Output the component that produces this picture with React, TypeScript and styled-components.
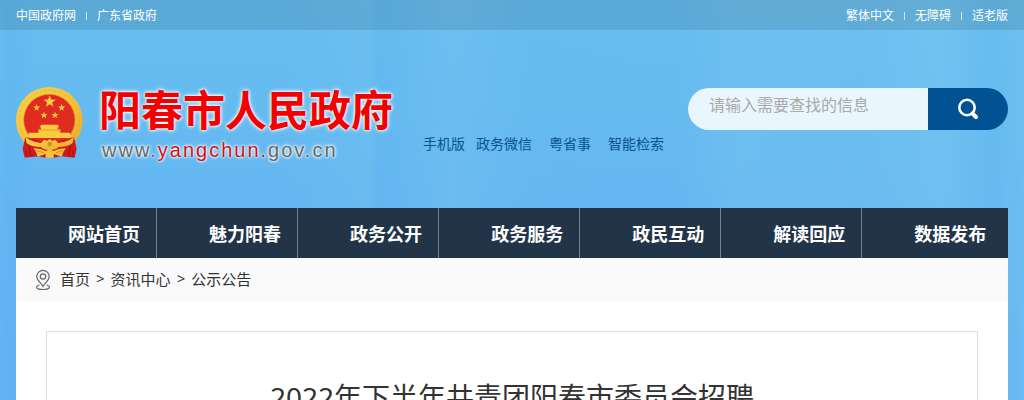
import React from "react";
import styled, { createGlobalStyle } from "styled-components";

const GlobalStyle = createGlobalStyle`
  * { box-sizing: border-box; }
  body {
    margin: 0;
    min-height: 100vh;
    color: #333;
    font-family: "Noto Sans", "Noto Sans CJK SC", sans-serif;
    font-size: 14px;
    background-color: #66b6f2;
    background-image:
      linear-gradient(90deg, transparent 0%, rgba(84, 174, 238, .25) 1%, transparent 3%, transparent 28%, rgba(120, 196, 240, .25) 36%, rgba(90, 180, 238, .25) 37%, rgba(122, 196, 242, .3) 44%, rgba(100, 186, 238, .2) 52%, transparent 62%, transparent 66%, rgba(124, 200, 240, .3) 72%, rgba(120, 196, 240, .3) 84%, rgba(128, 204, 240, .4) 92%, rgba(100, 188, 236, .3) 97%, rgba(120, 200, 240, .4) 100%),
      linear-gradient(180deg, #66bdf0 0, #65bbf0 100px, #66b6f2 220px, #64b2f4 400px);
  }
  a { color: inherit; text-decoration: none; }
`;

const TopBar = styled.div`
  height: 30px;
  padding: 1px 16px 0;
  display: flex;
  justify-content: space-between;
  background: rgba(0, 0, 0, 0.1);
  color: #fff;
  font-size: 12px;
  line-height: 30px;
`;

const TopLinks = styled.nav`
  display: flex;
  align-items: center;
  gap: 10px;
`;

const Divider = styled.span`
  width: 1px;
  height: 8px;
  background: rgba(255, 255, 255, 0.7);
`;

const Header = styled.header`
  height: 178px;
  padding: 57px 16px 0;
  display: flex;
  align-items: flex-start;
`;

const Logo = styled.a`
  display: flex;
  gap: 15px;
`;

const LogoText = styled.div`
  display: flex;
  flex-direction: column;
`;

const SiteName = styled.h1`
  margin: 0;
  font-size: 42px;
  line-height: 46px;
  font-weight: 700;
  color: #f50000;
  white-space: nowrap;
  text-shadow: 0 0 2px #fff, 0 0 3px #fff, 0 0 5px #fff;
`;

const Domain = styled.span`
  padding-left: 3px;
  font-family: "Liberation Sans", sans-serif;
  font-size: 20px;
  line-height: 34px;
  letter-spacing: 2px;
  color: #666;
  text-shadow: 0 0 2px #fff, 0 0 3px #fff, 0 0 4px #fff;
`;

const DomainMark = styled.span`
  color: #d40f14;
`;

const QuickLinks = styled.nav`
  margin: 47px 0 0 30px;
  display: flex;
  gap: 17px;
  color: #07528f;
  line-height: 20px;
  white-space: nowrap;
`;

const QuickPair = styled.span`
  display: flex;
  gap: 11px;
`;

const Search = styled.form`
  width: 320px;
  height: 42px;
  margin: 1px 0 0 auto;
  display: flex;
  border-radius: 21px;
  overflow: hidden;
`;

const SearchInput = styled.input`
  flex: 1;
  min-width: 0;
  border: 0;
  outline: 0;
  padding: 0 21px 8px;
  background: rgba(255, 255, 255, 0.86);
  color: #333;
  font: inherit;
  font-size: 16px;
  &::placeholder { color: #a9a9a9; opacity: 1; }
`;

const SearchButton = styled.button`
  width: 80px;
  border: 0;
  padding: 0;
  display: flex;
  align-items: center;
  justify-content: center;
  background: #005293;
  color: #fff;
  cursor: pointer;
`;

const Main = styled.main`
  margin: 0 16px;
  background: #fff;
`;

const NavList = styled.ul`
  margin: 0;
  padding: 0;
  display: flex;
  list-style: none;
  background: #223448;
`;

const NavItem = styled.li`
  width: 14.22%;
  border-right: 1px solid #75808c;
  &:last-child { flex: 1; border-right: 0; }
`;

const NavLink = styled.a`
  display: block;
  padding: 2px 0 0 52px;
  color: #fff;
  font-size: 18px;
  font-weight: 700;
  line-height: 48px;
  white-space: nowrap;
`;

const Breadcrumb = styled.nav`
  height: 43px;
  padding: 0 19px;
  display: flex;
  align-items: center;
  gap: 9px;
  background: #fafafa;
  font-size: 15px;
`;

const Crumbs = styled.span`
  display: flex;
  gap: 6px;
  padding-bottom: 2px;
`;

const Article = styled.article`
  margin: 30px 30px 0;
  padding: 44px 30px 60px;
  border: 1px solid #ddd;
  text-align: center;
`;

const Title = styled.h2`
  margin: 0;
  font-size: 28px;
  line-height: 42px;
  font-weight: 400;
`;

const star = (cx: number, cy: number, r: number) =>
  Array.from({ length: 10 }, (_, i) => {
    const a = (Math.PI * i) / 5 - Math.PI / 2;
    const d = i % 2 ? r * 0.42 : r;
    return `${(cx + d * Math.cos(a)).toFixed(1)},${(cy + d * Math.sin(a)).toFixed(1)}`;
  }).join(" ");

const Emblem = () => (
  <svg width="68" height="72" viewBox="0 0 204 216" aria-hidden="true">
    <defs>
      <linearGradient id="gold" x1="0" y1="0" x2="1" y2="1">
        <stop offset="0" stopColor="#f8d348" />
        <stop offset=".5" stopColor="#f5c23a" />
        <stop offset="1" stopColor="#e9a82c" />
      </linearGradient>
    </defs>
    <circle cx="100" cy="100" r="100" fill="url(#gold)" />
    <circle cx="100" cy="100" r="90" fill="none" stroke="#e0a428" strokeWidth="5" strokeDasharray="5 6" opacity=".35" />
    <circle cx="100" cy="99" r="77" fill="#e02b20" stroke="#d99a2a" strokeWidth="2" />
    <g fill="#f6cd3e">
      <polygon points={star(101, 44, 19)} />
      <polygon points={star(62, 62, 11)} />
      <polygon points={star(137, 62, 11)} />
      <polygon points={star(84, 85, 11)} />
      <polygon points={star(117, 85, 11)} />
      <path d="M76 113h49l5 8h-5v6h8v10h28l7 16H32l7-16h28v-10h8v-6h-5z" />
    </g>
    <path d="M67 129h66" stroke="#d98a22" strokeWidth="2" />
    <path d="M28 150l42 10 26 30-8 22-20-4-42 4-6-26zM174 150l-42 10-26 30 8 22 20-4 42 4 6-26z" fill="#cf1b1c" />
    <path d="M38 170l6 38M164 170l-6 38M30 190l4 18M172 190l-4 18" stroke="#9e1216" strokeWidth="3" />
    <path d="M28 148c14 16 32 18 48 20l8-10 9 4 8-6 8 6 9-4 8 10c16-2 34-4 48-20l-4 20c-12 10-28 12-42 12-8 12-46 12-54 0-14 0-30-2-42-12z" fill="url(#gold)" />
    <circle cx="101" cy="171" r="7" fill="#df8c20" />
    <path d="M52 184c16 0 28 4 38 8l11-6 11 6c10-4 22-8 38-8-8 8-10 16-12 24-10-2-18-4-24-8l-2 12H90l-2-12c-6 4-14 6-24 8-2-8-4-16-12-24z" fill="#f4c23b" />
    <path d="M62 191l20 6M140 191l-20 6" stroke="#d98a22" strokeWidth="3" />
  </svg>
);

const SearchIcon = () => (
  <svg width="22" height="22" viewBox="0 0 22 22" fill="none" stroke="currentColor" aria-hidden="true">
    <circle cx="10" cy="9.500" r="7.7" strokeWidth="2.6" />
    <path d="M15.5 15.5l3.500 3.500" strokeWidth="4" strokeLinecap="round" />
  </svg>
);

const PinIcon = () => (
  <svg width="16" height="22" viewBox="0 0 16 22" fill="none" stroke="#666" strokeWidth="1.2" aria-hidden="true">
    <path d="M8 17.5C5.5 13.500 1.800 11 1.800 7.500a6.200 6.200 0 0 1 12.400 0C14.200 11 10.500 13.500 8 17.500z" />
    <circle cx="8" cy="7.500" r="2.700" />
    <path d="M4.500 16C-.5 17.500 1 20.500 8 20.500s8.500-3 3.500-4.500" />
  </svg>
);

const navItems = ["网站首页", "魅力阳春", "政务公开", "政务服务", "政民互动", "解读回应", "数据发布"];

export default function App() {
  return (
    <>
      <GlobalStyle />
      <TopBar>
        <TopLinks>
          <a href="#gov">中国政府网</a>
          <Divider />
          <a href="#gd">广东省政府</a>
        </TopLinks>
        <TopLinks>
          <a href="#traditional">繁体中文</a>
          <Divider />
          <a href="#accessible">无障碍</a>
          <Divider />
          <a href="#senior">适老版</a>
        </TopLinks>
      </TopBar>
      <Header>
        <Logo href="#home">
          <Emblem />
          <LogoText>
            <SiteName>阳春市人民政府</SiteName>
            <Domain>www.<DomainMark>yangchun.</DomainMark>gov.cn</Domain>
          </LogoText>
        </Logo>
        <QuickLinks>
          <QuickPair>
            <a href="#mobile">手机版</a>
            <a href="#wechat">政务微信</a>
          </QuickPair>
          <a href="#yss">粤省事</a>
          <a href="#search">智能检索</a>
        </QuickLinks>
        <Search onSubmit={(e) => e.preventDefault()}>
          <SearchInput type="text" aria-label="搜索" placeholder="请输入需要查找的信息" />
          <SearchButton type="submit" aria-label="搜索">
            <SearchIcon />
          </SearchButton>
        </Search>
      </Header>
      <Main>
        <nav>
          <NavList>
            {navItems.map((item) => (
              <NavItem key={item}>
                <NavLink href="#nav">{item}</NavLink>
              </NavItem>
            ))}
          </NavList>
        </nav>
        <Breadcrumb>
          <PinIcon />
          <Crumbs>
            <a href="#home">首页</a>
            <span>&gt;</span>
            <a href="#news">资讯中心</a>
            <span>&gt;</span>
            <a href="#notice">公示公告</a>
          </Crumbs>
        </Breadcrumb>
        <Article>
          <Title>2022年下半年共青团阳春市委员会招聘</Title>
        </Article>
      </Main>
    </>
  );
}
